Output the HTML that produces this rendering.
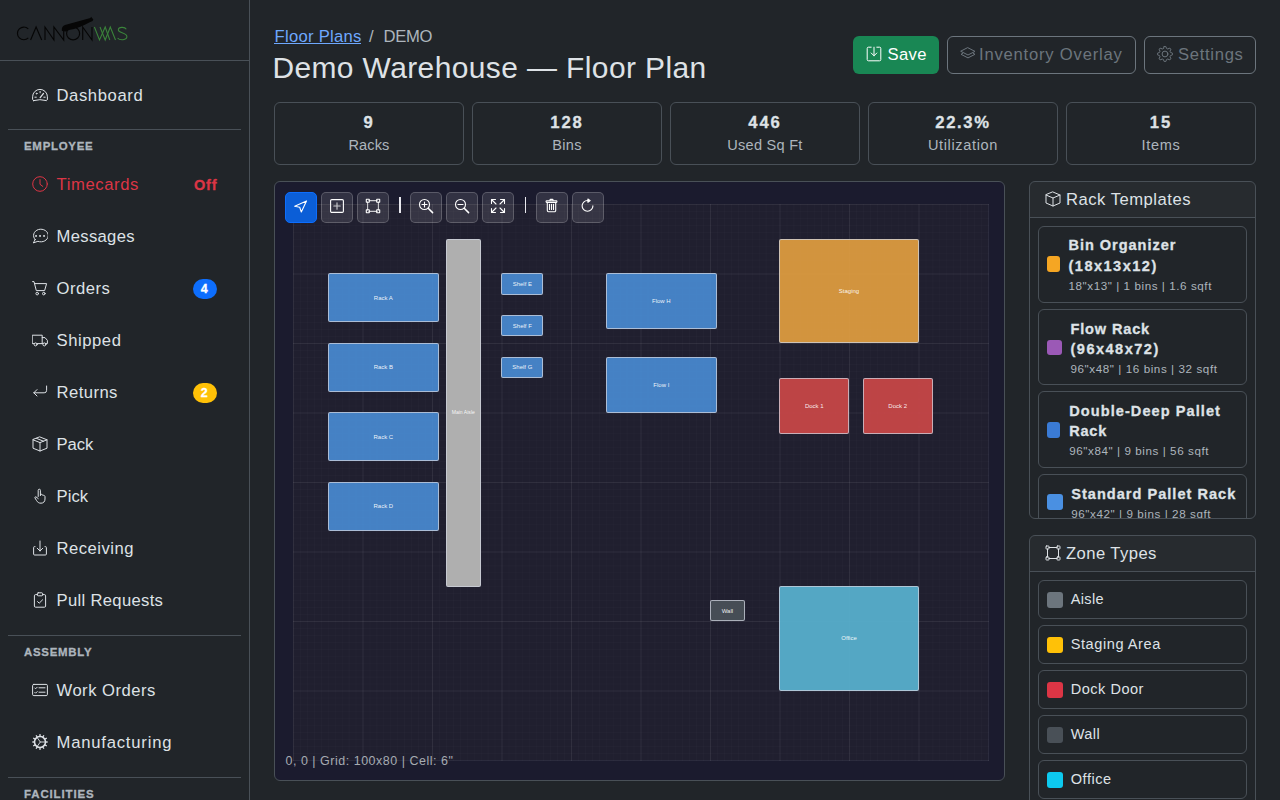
<!DOCTYPE html>
<html><head><meta charset="utf-8"><title>Floor Plan</title>
<style>
html,body{margin:0;padding:0;width:1280px;height:800px;overflow:hidden;background:#212529;font-family:"Liberation Sans",sans-serif;}
.a{position:absolute;}
.t{position:absolute;white-space:nowrap;}
svg.a{display:block;}
</style></head><body>
<div class="a" style="left:249px;top:0px;width:1px;height:800px;background:#495057"></div>
<div class="a" style="left:0px;top:60px;width:249px;height:1px;background:#495057"></div>
<div class="a" style="left:8px;top:129px;width:233px;height:1px;background:#495057"></div>
<div class="a" style="left:8px;top:635px;width:233px;height:1px;background:#495057"></div>
<div class="a" style="left:8px;top:777px;width:233px;height:1px;background:#495057"></div>
<svg class="a" style="left:0;top:0" width="140" height="60" viewBox="0 0 140 60">
<g fill="none" stroke="#060606" stroke-width="1.15">
<path d="M28.3 28.9 A6.35 6.35 0 1 0 28.3 37.9"/>
<path d="M30.6 40 L36.1 27 L41.7 40"/>
<path d="M45 40 V27 L53.9 40 V27 L63.7 40 V27"/>
<circle cx="73.1" cy="33.4" r="6.5"/>
<path d="M82.7 40 V27 L92 40 V27"/>
</g>
<g fill="none" stroke="#3b853b" stroke-width="1.05">
<path d="M94.4 27 L99.5 40 L105.2 27 L109.8 40"/>
<path d="M100 27 L105.2 40 L110.3 27 L115.5 40"/>
<path d="M126.3 29.2 C125 26.8 118.5 26.5 118.3 30 C118.2 33 126.8 32.6 126.9 36.6 C127 40.6 119.5 40.6 117.6 38"/>
</g>
<path fill="#060606" d="M61.75 30.2 C61.7 27.6 63 25.8 65 25.1 L90.4 18.1 L91.1 16.8 L93.3 19.6 L92.6 21 L89.2 22.4 Q79 28.2 69 29.9 L65.8 31.5 L62.2 31 Z"/>
</svg>
<div class="t" style="left:24.00px;top:141.12px;font-size:11.44px;line-height:11.44px;letter-spacing:0.741px;color:#adb5bd;font-weight:700;-webkit-text-stroke:0.3px #adb5bd;">EMPLOYEE</div>
<div class="t" style="left:24.00px;top:647.12px;font-size:11.44px;line-height:11.44px;letter-spacing:0.732px;color:#adb5bd;font-weight:700;-webkit-text-stroke:0.3px #adb5bd;">ASSEMBLY</div>
<div class="t" style="left:24.00px;top:789.12px;font-size:11.44px;line-height:11.44px;letter-spacing:0.891px;color:#adb5bd;font-weight:700;-webkit-text-stroke:0.3px #adb5bd;">FACILITIES</div>
<svg class="a" style="left:32px;top:87px" width="16" height="16" viewBox="0 0 16 16" fill="none" stroke="#dee2e6" stroke-width="1.0" stroke-linecap="round" stroke-linejoin="round"><path d="M1.5 13.6 C.9 13.3 .6 12.7 .6 12 V9.8 A7.4 7.4 0 0 1 15.4 9.8 V12 C15.4 12.7 15.1 13.3 14.5 13.6 Q8 11.7 1.5 13.6 Z"/><path d="M8.2 10.6 L11.5 6.4" stroke-width="1.3"/><circle cx="4.6" cy="6.6" r=".45"/><path d="M8.1 4.4 V5.8 M2.9 10.2 H4.3 M11.8 10.2 H13.2"/></svg>
<div class="t" style="left:56.50px;top:87.71px;font-size:16.64px;line-height:16.64px;letter-spacing:0.600px;color:#dee2e6;">Dashboard</div>
<svg class="a" style="left:32px;top:176px" width="16" height="16" viewBox="0 0 16 16" fill="none" stroke="#dc3545" stroke-width="1.0" stroke-linecap="round" stroke-linejoin="round"><circle cx="8" cy="8" r="7.3"/><path d="M8 3.6 V8.3 L10.8 10.4"/></svg>
<div class="t" style="left:56.50px;top:176.71px;font-size:16.64px;line-height:16.64px;letter-spacing:0.611px;color:#dc3545;">Timecards</div>
<svg class="a" style="left:32px;top:228px" width="16" height="16" viewBox="0 0 16 16" fill="none" stroke="#dee2e6" stroke-width="1.0" stroke-linecap="round" stroke-linejoin="round"><path d="M3.1 11.5 A7.4 6.3 0 1 1 5.9 13.3 L1.3 14.9 C2 13.8 2.6 12.7 3.1 11.5 Z"/><rect x="3.2" y="7.1" width="1.7" height="1.7" fill="#dee2e6" stroke="none"/><rect x="7.2" y="7.1" width="1.7" height="1.7" fill="#dee2e6" stroke="none"/><rect x="11.2" y="7.1" width="1.7" height="1.7" fill="#dee2e6" stroke="none"/></svg>
<div class="t" style="left:56.50px;top:228.71px;font-size:16.64px;line-height:16.64px;letter-spacing:0.328px;color:#dee2e6;">Messages</div>
<svg class="a" style="left:32px;top:280px" width="16" height="16" viewBox="0 0 16 16" fill="none" stroke="#dee2e6" stroke-width="1.0" stroke-linecap="round" stroke-linejoin="round"><path d="M.6 1.6 H2 L4.3 10.6 H12.6 L14.6 3.6 H2.6"/><circle cx="5.2" cy="13.6" r="1.3"/><circle cx="11.8" cy="13.6" r="1.3"/></svg>
<div class="t" style="left:56.50px;top:280.71px;font-size:16.64px;line-height:16.64px;letter-spacing:0.492px;color:#dee2e6;">Orders</div>
<svg class="a" style="left:32px;top:332px" width="16" height="16" viewBox="0 0 16 16" fill="none" stroke="#dee2e6" stroke-width="1.0" stroke-linecap="round" stroke-linejoin="round"><path d="M.6 3.2 H10.2 V11.6 H.6 Z"/><path d="M10.2 5.6 H13 L15.4 8.4 V11.6 H10.2"/><circle cx="3.6" cy="12.4" r="1.5" fill="#212529"/><circle cx="12.4" cy="12.4" r="1.5" fill="#212529"/></svg>
<div class="t" style="left:56.50px;top:332.71px;font-size:16.64px;line-height:16.64px;letter-spacing:0.569px;color:#dee2e6;">Shipped</div>
<svg class="a" style="left:32px;top:384px" width="16" height="16" viewBox="0 0 16 16" fill="none" stroke="#dee2e6" stroke-width="1.0" stroke-linecap="round" stroke-linejoin="round"><path d="M14.6 2 V6.4 A2.4 2.4 0 0 1 12.2 8.8 H1.8"/><path d="M5 5.6 L1.8 8.8 L5 12"/></svg>
<div class="t" style="left:56.50px;top:384.71px;font-size:16.64px;line-height:16.64px;letter-spacing:0.452px;color:#dee2e6;">Returns</div>
<svg class="a" style="left:32px;top:436px" width="16" height="16" viewBox="0 0 16 16" fill="none" stroke="#dee2e6" stroke-width="1.0" stroke-linecap="round" stroke-linejoin="round"><path d="M8 1 L15 3.8 V12.2 L8 15 L1 12.2 V3.8 Z"/><path d="M1 3.8 L8 6.6 L15 3.8 M8 6.6 V15"/><path d="M4.5 2.4 L11.5 5.2"/></svg>
<div class="t" style="left:56.50px;top:436.71px;font-size:16.64px;line-height:16.64px;letter-spacing:-0.049px;color:#dee2e6;">Pack</div>
<svg class="a" style="left:32px;top:488px" width="16" height="16" viewBox="0 0 16 16" fill="none" stroke="#dee2e6" stroke-width="1.0" stroke-linecap="round" stroke-linejoin="round"><path d="M6.2 8.5 V2.3 A1.1 1.1 0 0 1 8.4 2.3 V7.6 M8.4 6.4 C9.6 6 10.6 6.4 10.8 7.4 C12 7 12.9 7.6 13 8.6 V11 C13 13.5 11.5 15.2 9 15.2 C6.8 15.2 5.5 14.2 4.6 12.6 L3 10 C2.6 9.3 3.3 8.5 4 8.9 L6.2 10.6"/></svg>
<div class="t" style="left:56.50px;top:488.71px;font-size:16.64px;line-height:16.64px;letter-spacing:0.092px;color:#dee2e6;">Pick</div>
<svg class="a" style="left:32px;top:540px" width="16" height="16" viewBox="0 0 16 16" fill="none" stroke="#dee2e6" stroke-width="1.0" stroke-linecap="round" stroke-linejoin="round"><path d="M3 6.6 H2.6 A1 1 0 0 0 1.6 7.6 V14 A1 1 0 0 0 2.6 15 H13.4 A1 1 0 0 0 14.4 14 V7.6 A1 1 0 0 0 13.4 6.6 H13"/><path d="M8 1 V11 M5.2 8.2 L8 11 L10.8 8.2"/></svg>
<div class="t" style="left:56.50px;top:540.71px;font-size:16.64px;line-height:16.64px;letter-spacing:0.497px;color:#dee2e6;">Receiving</div>
<svg class="a" style="left:32px;top:592px" width="16" height="16" viewBox="0 0 16 16" fill="none" stroke="#dee2e6" stroke-width="1.0" stroke-linecap="round" stroke-linejoin="round"><path d="M5 2.6 H3.6 A1.2 1.2 0 0 0 2.4 3.8 V14 A1.2 1.2 0 0 0 3.6 15.2 H12.4 A1.2 1.2 0 0 0 13.6 14 V3.8 A1.2 1.2 0 0 0 12.4 2.6 H11"/><rect x="5.4" y=".8" width="5.2" height="3" rx=".8"/><path d="M5.6 9.6 L7.2 11.2 L10.6 7.8"/></svg>
<div class="t" style="left:56.50px;top:592.71px;font-size:16.64px;line-height:16.64px;letter-spacing:0.319px;color:#dee2e6;">Pull Requests</div>
<svg class="a" style="left:32px;top:682px" width="16" height="16" viewBox="0 0 16 16" fill="none" stroke="#dee2e6" stroke-width="1.0" stroke-linecap="round" stroke-linejoin="round"><rect x=".6" y="2.4" width="14.8" height="11.2" rx="1.2"/><path d="M7 5.8 H13 M7 10.2 H13 M2.8 6 L3.6 6.8 L5.2 5.2 M2.8 10.4 L3.6 11.2 L5.2 9.6"/></svg>
<div class="t" style="left:56.50px;top:682.71px;font-size:16.64px;line-height:16.64px;letter-spacing:0.492px;color:#dee2e6;">Work Orders</div>
<svg class="a" style="left:32px;top:734px" width="16" height="16" viewBox="0 0 16 16" fill="none" stroke="#dee2e6" stroke-width="1.0" stroke-linecap="round" stroke-linejoin="round"><path fill="#dee2e6" stroke="none" fill-rule="evenodd" d="M6.40 2.01 L7.35 1.83 L7.42 0.12 L8.58 0.12 L8.65 1.83 L9.60 2.01 L10.52 2.34 L11.44 0.89 L12.44 1.47 L11.64 2.98 L12.38 3.62 L13.02 4.36 L14.53 3.56 L15.11 4.56 L13.66 5.48 L13.99 6.40 L14.17 7.35 L15.88 7.42 L15.88 8.58 L14.17 8.65 L13.99 9.60 L13.66 10.52 L15.11 11.44 L14.53 12.44 L13.02 11.64 L12.38 12.38 L11.64 13.02 L12.44 14.53 L11.44 15.11 L10.52 13.66 L9.60 13.99 L8.65 14.17 L8.58 15.88 L7.42 15.88 L7.35 14.17 L6.40 13.99 L5.48 13.66 L4.56 15.11 L3.56 14.53 L4.36 13.02 L3.62 12.38 L2.98 11.64 L1.47 12.44 L0.89 11.44 L2.34 10.52 L2.01 9.60 L1.83 8.65 L0.12 8.58 L0.12 7.42 L1.83 7.35 L2.01 6.40 L2.34 5.48 L0.89 4.56 L1.47 3.56 L2.98 4.36 L3.62 3.62 L4.36 2.98 L3.56 1.47 L4.56 0.89 L5.48 2.34 Z M12.7 8 A4.7 4.7 0 1 0 3.3 8 A4.7 4.7 0 1 0 12.7 8 Z"/><path d="M5.4 3.9 L8.3 8 L5.4 12.1 M8.3 8 H12.6" stroke-width=".9"/></svg>
<div class="t" style="left:56.50px;top:734.71px;font-size:16.64px;line-height:16.64px;letter-spacing:0.801px;color:#dee2e6;">Manufacturing</div>
<div class="t" style="left:194.00px;top:178.47px;font-size:14.56px;line-height:14.56px;letter-spacing:0.740px;color:#dc3545;font-weight:700;-webkit-text-stroke:0.3px #dc3545;">Off</div>
<div class="a" style="left:193px;top:279px;width:24px;height:20px;background:#0d6efd;border-radius:10px"></div>
<div class="t" style="left:200.83px;top:283.04px;font-size:12.48px;line-height:12.48px;letter-spacing:1.409px;color:#fff;font-weight:700;-webkit-text-stroke:0.3px #fff;">4</div>
<div class="a" style="left:193px;top:383px;width:24px;height:20px;background:#ffc107;border-radius:10px"></div>
<div class="t" style="left:200.83px;top:386.54px;font-size:12.48px;line-height:12.48px;letter-spacing:1.409px;color:#fff;font-weight:700;-webkit-text-stroke:0.3px #fff;">2</div>
<div class="t" style="left:274.50px;top:28.71px;font-size:16.64px;line-height:16.64px;letter-spacing:0.282px;color:#6ea8fe;">Floor Plans</div>
<div class="a" style="left:274px;top:43px;width:87px;height:1px;background:#6ea8fe"></div>
<div class="t" style="left:369.00px;top:28.71px;font-size:16.64px;line-height:16.64px;letter-spacing:0.767px;color:#adb5bd;">/</div>
<div class="t" style="left:383.50px;top:28.71px;font-size:16.64px;line-height:16.64px;letter-spacing:-0.273px;color:#adb5bd;">DEMO</div>
<div class="t" style="left:272.40px;top:52.95px;font-size:29.95px;line-height:29.95px;letter-spacing:0.411px;color:#dee2e6;">Demo Warehouse — Floor Plan</div>
<div class="a" style="left:853px;top:36px;width:86px;height:38px;background:#198754;border-radius:6px"></div>
<svg class="a" style="left:866px;top:46px" width="16" height="16" viewBox="0 0 16 16" fill="none" stroke="#fff" stroke-width="1.0" stroke-linecap="round" stroke-linejoin="round"><path d="M5.2 1.2 H2.4 A1.2 1.2 0 0 0 1.2 2.4 V13.6 A1.2 1.2 0 0 0 2.4 14.8 H13.6 A1.2 1.2 0 0 0 14.8 13.6 V2.4 A1.2 1.2 0 0 0 13.6 1.2 H10.8"/><path d="M8 1.2 V9.8 M5.2 7 L8 9.8 L10.8 7"/></svg>
<div class="t" style="left:887.50px;top:46.71px;font-size:16.64px;line-height:16.64px;letter-spacing:0.336px;color:#fff;">Save</div>
<div class="a" style="left:947px;top:36px;width:189px;height:38px;border:1px solid #6c757d;border-radius:6px;box-sizing:border-box"></div>
<svg class="a" style="left:960px;top:46px" width="16" height="16" viewBox="0 0 16 16" fill="none" stroke="#6c757d" stroke-width="1.0" stroke-linecap="round" stroke-linejoin="round"><path d="M8 1.8 L15 5.4 L8 9 L1 5.4 Z"/><path d="M2.6 7.4 L1 8.3 L8 11.9 L15 8.3 L13.4 7.4"/></svg>
<div class="t" style="left:979.00px;top:46.71px;font-size:16.64px;line-height:16.64px;letter-spacing:0.783px;color:#6c757d;">Inventory Overlay</div>
<div class="a" style="left:1144px;top:36px;width:112px;height:38px;border:1px solid #6c757d;border-radius:6px;box-sizing:border-box"></div>
<svg class="a" style="left:1157px;top:46px" width="16" height="16" viewBox="0 0 16 16" fill="none" stroke="#6c757d" stroke-width="1.0" stroke-linecap="round" stroke-linejoin="round"><circle cx="8" cy="8" r="2.9"/><path d="M7.26 0.44 L8.74 0.44 L9.65 2.55 L10.69 2.97 L12.82 2.13 L13.87 3.18 L13.03 5.31 L13.45 6.35 L15.56 7.26 L15.56 8.74 L13.45 9.65 L13.03 10.69 L13.87 12.82 L12.82 13.87 L10.69 13.03 L9.65 13.45 L8.74 15.56 L7.26 15.56 L6.35 13.45 L5.31 13.03 L3.18 13.87 L2.13 12.82 L2.97 10.69 L2.55 9.65 L0.44 8.74 L0.44 7.26 L2.55 6.35 L2.97 5.31 L2.13 3.18 L3.18 2.13 L5.31 2.97 L6.35 2.55 Z"/></svg>
<div class="t" style="left:1178.00px;top:46.71px;font-size:16.64px;line-height:16.64px;letter-spacing:0.687px;color:#6c757d;">Settings</div>
<div class="a" style="left:274px;top:102px;width:190px;height:63px;border:1px solid #495057;border-radius:6px;box-sizing:border-box"></div>
<div class="t" style="left:363.43px;top:114.71px;font-size:16.64px;line-height:16.64px;letter-spacing:1.878px;color:#dee2e6;font-weight:700;-webkit-text-stroke:0.3px #dee2e6;">9</div>
<div class="t" style="left:348.45px;top:138.27px;font-size:14.56px;line-height:14.56px;letter-spacing:0.129px;color:#adb5bd;">Racks</div>
<div class="a" style="left:472px;top:102px;width:190px;height:63px;border:1px solid #495057;border-radius:6px;box-sizing:border-box"></div>
<div class="t" style="left:550.30px;top:114.71px;font-size:16.64px;line-height:16.64px;letter-spacing:1.878px;color:#dee2e6;font-weight:700;-webkit-text-stroke:0.3px #dee2e6;">128</div>
<div class="t" style="left:552.17px;top:138.27px;font-size:14.56px;line-height:14.56px;letter-spacing:0.334px;color:#adb5bd;">Bins</div>
<div class="a" style="left:670px;top:102px;width:190px;height:63px;border:1px solid #495057;border-radius:6px;box-sizing:border-box"></div>
<div class="t" style="left:748.30px;top:114.71px;font-size:16.64px;line-height:16.64px;letter-spacing:1.878px;color:#dee2e6;font-weight:700;-webkit-text-stroke:0.3px #dee2e6;">446</div>
<div class="t" style="left:727.37px;top:138.27px;font-size:14.56px;line-height:14.56px;letter-spacing:0.243px;color:#adb5bd;">Used Sq Ft</div>
<div class="a" style="left:868px;top:102px;width:190px;height:63px;border:1px solid #495057;border-radius:6px;box-sizing:border-box"></div>
<div class="t" style="left:935.25px;top:114.71px;font-size:16.64px;line-height:16.64px;letter-spacing:1.665px;color:#dee2e6;font-weight:700;-webkit-text-stroke:0.3px #dee2e6;">22.3%</div>
<div class="t" style="left:927.92px;top:138.27px;font-size:14.56px;line-height:14.56px;letter-spacing:0.639px;color:#adb5bd;">Utilization</div>
<div class="a" style="left:1066px;top:102px;width:190px;height:63px;border:1px solid #495057;border-radius:6px;box-sizing:border-box"></div>
<div class="t" style="left:1149.87px;top:114.71px;font-size:16.64px;line-height:16.64px;letter-spacing:1.878px;color:#dee2e6;font-weight:700;-webkit-text-stroke:0.3px #dee2e6;">15</div>
<div class="t" style="left:1141.42px;top:138.27px;font-size:14.56px;line-height:14.56px;letter-spacing:0.713px;color:#adb5bd;">Items</div>
<div class="a" style="left:274px;top:181px;width:731px;height:600px;background:#1b1b2e;border:1px solid #495057;border-radius:6px;box-sizing:border-box"></div>
<div class="a" style="left:293.0px;top:204.0px;width:695px;height:556px;background:#201f2f"></div>
<svg class="a" style="left:292.5px;top:203.5px;overflow:visible" width="696" height="557" viewBox="-0.5 -0.5 696 557"><rect x="-0.50" y="-0.5" width="1" height="557" fill="rgba(255,255,255,0.075)"/><rect x="6.45" y="-0.5" width="1" height="557" fill="rgba(255,255,255,0.02)"/><rect x="13.40" y="-0.5" width="1" height="557" fill="rgba(255,255,255,0.02)"/><rect x="20.35" y="-0.5" width="1" height="557" fill="rgba(255,255,255,0.02)"/><rect x="27.30" y="-0.5" width="1" height="557" fill="rgba(255,255,255,0.02)"/><rect x="34.25" y="-0.5" width="1" height="557" fill="rgba(255,255,255,0.02)"/><rect x="41.20" y="-0.5" width="1" height="557" fill="rgba(255,255,255,0.02)"/><rect x="48.15" y="-0.5" width="1" height="557" fill="rgba(255,255,255,0.02)"/><rect x="55.10" y="-0.5" width="1" height="557" fill="rgba(255,255,255,0.02)"/><rect x="62.05" y="-0.5" width="1" height="557" fill="rgba(255,255,255,0.02)"/><rect x="69.00" y="-0.5" width="1" height="557" fill="rgba(255,255,255,0.075)"/><rect x="75.95" y="-0.5" width="1" height="557" fill="rgba(255,255,255,0.02)"/><rect x="82.90" y="-0.5" width="1" height="557" fill="rgba(255,255,255,0.02)"/><rect x="89.85" y="-0.5" width="1" height="557" fill="rgba(255,255,255,0.02)"/><rect x="96.80" y="-0.5" width="1" height="557" fill="rgba(255,255,255,0.02)"/><rect x="103.75" y="-0.5" width="1" height="557" fill="rgba(255,255,255,0.02)"/><rect x="110.70" y="-0.5" width="1" height="557" fill="rgba(255,255,255,0.02)"/><rect x="117.65" y="-0.5" width="1" height="557" fill="rgba(255,255,255,0.02)"/><rect x="124.60" y="-0.5" width="1" height="557" fill="rgba(255,255,255,0.02)"/><rect x="131.55" y="-0.5" width="1" height="557" fill="rgba(255,255,255,0.02)"/><rect x="138.50" y="-0.5" width="1" height="557" fill="rgba(255,255,255,0.075)"/><rect x="145.45" y="-0.5" width="1" height="557" fill="rgba(255,255,255,0.02)"/><rect x="152.40" y="-0.5" width="1" height="557" fill="rgba(255,255,255,0.02)"/><rect x="159.35" y="-0.5" width="1" height="557" fill="rgba(255,255,255,0.02)"/><rect x="166.30" y="-0.5" width="1" height="557" fill="rgba(255,255,255,0.02)"/><rect x="173.25" y="-0.5" width="1" height="557" fill="rgba(255,255,255,0.02)"/><rect x="180.20" y="-0.5" width="1" height="557" fill="rgba(255,255,255,0.02)"/><rect x="187.15" y="-0.5" width="1" height="557" fill="rgba(255,255,255,0.02)"/><rect x="194.10" y="-0.5" width="1" height="557" fill="rgba(255,255,255,0.02)"/><rect x="201.05" y="-0.5" width="1" height="557" fill="rgba(255,255,255,0.02)"/><rect x="208.00" y="-0.5" width="1" height="557" fill="rgba(255,255,255,0.075)"/><rect x="214.95" y="-0.5" width="1" height="557" fill="rgba(255,255,255,0.02)"/><rect x="221.90" y="-0.5" width="1" height="557" fill="rgba(255,255,255,0.02)"/><rect x="228.85" y="-0.5" width="1" height="557" fill="rgba(255,255,255,0.02)"/><rect x="235.80" y="-0.5" width="1" height="557" fill="rgba(255,255,255,0.02)"/><rect x="242.75" y="-0.5" width="1" height="557" fill="rgba(255,255,255,0.02)"/><rect x="249.70" y="-0.5" width="1" height="557" fill="rgba(255,255,255,0.02)"/><rect x="256.65" y="-0.5" width="1" height="557" fill="rgba(255,255,255,0.02)"/><rect x="263.60" y="-0.5" width="1" height="557" fill="rgba(255,255,255,0.02)"/><rect x="270.55" y="-0.5" width="1" height="557" fill="rgba(255,255,255,0.02)"/><rect x="277.50" y="-0.5" width="1" height="557" fill="rgba(255,255,255,0.075)"/><rect x="284.45" y="-0.5" width="1" height="557" fill="rgba(255,255,255,0.02)"/><rect x="291.40" y="-0.5" width="1" height="557" fill="rgba(255,255,255,0.02)"/><rect x="298.35" y="-0.5" width="1" height="557" fill="rgba(255,255,255,0.02)"/><rect x="305.30" y="-0.5" width="1" height="557" fill="rgba(255,255,255,0.02)"/><rect x="312.25" y="-0.5" width="1" height="557" fill="rgba(255,255,255,0.02)"/><rect x="319.20" y="-0.5" width="1" height="557" fill="rgba(255,255,255,0.02)"/><rect x="326.15" y="-0.5" width="1" height="557" fill="rgba(255,255,255,0.02)"/><rect x="333.10" y="-0.5" width="1" height="557" fill="rgba(255,255,255,0.02)"/><rect x="340.05" y="-0.5" width="1" height="557" fill="rgba(255,255,255,0.02)"/><rect x="347.00" y="-0.5" width="1" height="557" fill="rgba(255,255,255,0.075)"/><rect x="353.95" y="-0.5" width="1" height="557" fill="rgba(255,255,255,0.02)"/><rect x="360.90" y="-0.5" width="1" height="557" fill="rgba(255,255,255,0.02)"/><rect x="367.85" y="-0.5" width="1" height="557" fill="rgba(255,255,255,0.02)"/><rect x="374.80" y="-0.5" width="1" height="557" fill="rgba(255,255,255,0.02)"/><rect x="381.75" y="-0.5" width="1" height="557" fill="rgba(255,255,255,0.02)"/><rect x="388.70" y="-0.5" width="1" height="557" fill="rgba(255,255,255,0.02)"/><rect x="395.65" y="-0.5" width="1" height="557" fill="rgba(255,255,255,0.02)"/><rect x="402.60" y="-0.5" width="1" height="557" fill="rgba(255,255,255,0.02)"/><rect x="409.55" y="-0.5" width="1" height="557" fill="rgba(255,255,255,0.02)"/><rect x="416.50" y="-0.5" width="1" height="557" fill="rgba(255,255,255,0.075)"/><rect x="423.45" y="-0.5" width="1" height="557" fill="rgba(255,255,255,0.02)"/><rect x="430.40" y="-0.5" width="1" height="557" fill="rgba(255,255,255,0.02)"/><rect x="437.35" y="-0.5" width="1" height="557" fill="rgba(255,255,255,0.02)"/><rect x="444.30" y="-0.5" width="1" height="557" fill="rgba(255,255,255,0.02)"/><rect x="451.25" y="-0.5" width="1" height="557" fill="rgba(255,255,255,0.02)"/><rect x="458.20" y="-0.5" width="1" height="557" fill="rgba(255,255,255,0.02)"/><rect x="465.15" y="-0.5" width="1" height="557" fill="rgba(255,255,255,0.02)"/><rect x="472.10" y="-0.5" width="1" height="557" fill="rgba(255,255,255,0.02)"/><rect x="479.05" y="-0.5" width="1" height="557" fill="rgba(255,255,255,0.02)"/><rect x="486.00" y="-0.5" width="1" height="557" fill="rgba(255,255,255,0.075)"/><rect x="492.95" y="-0.5" width="1" height="557" fill="rgba(255,255,255,0.02)"/><rect x="499.90" y="-0.5" width="1" height="557" fill="rgba(255,255,255,0.02)"/><rect x="506.85" y="-0.5" width="1" height="557" fill="rgba(255,255,255,0.02)"/><rect x="513.80" y="-0.5" width="1" height="557" fill="rgba(255,255,255,0.02)"/><rect x="520.75" y="-0.5" width="1" height="557" fill="rgba(255,255,255,0.02)"/><rect x="527.70" y="-0.5" width="1" height="557" fill="rgba(255,255,255,0.02)"/><rect x="534.65" y="-0.5" width="1" height="557" fill="rgba(255,255,255,0.02)"/><rect x="541.60" y="-0.5" width="1" height="557" fill="rgba(255,255,255,0.02)"/><rect x="548.55" y="-0.5" width="1" height="557" fill="rgba(255,255,255,0.02)"/><rect x="555.50" y="-0.5" width="1" height="557" fill="rgba(255,255,255,0.075)"/><rect x="562.45" y="-0.5" width="1" height="557" fill="rgba(255,255,255,0.02)"/><rect x="569.40" y="-0.5" width="1" height="557" fill="rgba(255,255,255,0.02)"/><rect x="576.35" y="-0.5" width="1" height="557" fill="rgba(255,255,255,0.02)"/><rect x="583.30" y="-0.5" width="1" height="557" fill="rgba(255,255,255,0.02)"/><rect x="590.25" y="-0.5" width="1" height="557" fill="rgba(255,255,255,0.02)"/><rect x="597.20" y="-0.5" width="1" height="557" fill="rgba(255,255,255,0.02)"/><rect x="604.15" y="-0.5" width="1" height="557" fill="rgba(255,255,255,0.02)"/><rect x="611.10" y="-0.5" width="1" height="557" fill="rgba(255,255,255,0.02)"/><rect x="618.05" y="-0.5" width="1" height="557" fill="rgba(255,255,255,0.02)"/><rect x="625.00" y="-0.5" width="1" height="557" fill="rgba(255,255,255,0.075)"/><rect x="631.95" y="-0.5" width="1" height="557" fill="rgba(255,255,255,0.02)"/><rect x="638.90" y="-0.5" width="1" height="557" fill="rgba(255,255,255,0.02)"/><rect x="645.85" y="-0.5" width="1" height="557" fill="rgba(255,255,255,0.02)"/><rect x="652.80" y="-0.5" width="1" height="557" fill="rgba(255,255,255,0.02)"/><rect x="659.75" y="-0.5" width="1" height="557" fill="rgba(255,255,255,0.02)"/><rect x="666.70" y="-0.5" width="1" height="557" fill="rgba(255,255,255,0.02)"/><rect x="673.65" y="-0.5" width="1" height="557" fill="rgba(255,255,255,0.02)"/><rect x="680.60" y="-0.5" width="1" height="557" fill="rgba(255,255,255,0.02)"/><rect x="687.55" y="-0.5" width="1" height="557" fill="rgba(255,255,255,0.02)"/><rect x="694.50" y="-0.5" width="1" height="557" fill="rgba(255,255,255,0.075)"/><rect x="-0.5" y="-0.50" width="696" height="1" fill="rgba(255,255,255,0.075)"/><rect x="-0.5" y="6.45" width="696" height="1" fill="rgba(255,255,255,0.02)"/><rect x="-0.5" y="13.40" width="696" height="1" fill="rgba(255,255,255,0.02)"/><rect x="-0.5" y="20.35" width="696" height="1" fill="rgba(255,255,255,0.02)"/><rect x="-0.5" y="27.30" width="696" height="1" fill="rgba(255,255,255,0.02)"/><rect x="-0.5" y="34.25" width="696" height="1" fill="rgba(255,255,255,0.02)"/><rect x="-0.5" y="41.20" width="696" height="1" fill="rgba(255,255,255,0.02)"/><rect x="-0.5" y="48.15" width="696" height="1" fill="rgba(255,255,255,0.02)"/><rect x="-0.5" y="55.10" width="696" height="1" fill="rgba(255,255,255,0.02)"/><rect x="-0.5" y="62.05" width="696" height="1" fill="rgba(255,255,255,0.02)"/><rect x="-0.5" y="69.00" width="696" height="1" fill="rgba(255,255,255,0.075)"/><rect x="-0.5" y="75.95" width="696" height="1" fill="rgba(255,255,255,0.02)"/><rect x="-0.5" y="82.90" width="696" height="1" fill="rgba(255,255,255,0.02)"/><rect x="-0.5" y="89.85" width="696" height="1" fill="rgba(255,255,255,0.02)"/><rect x="-0.5" y="96.80" width="696" height="1" fill="rgba(255,255,255,0.02)"/><rect x="-0.5" y="103.75" width="696" height="1" fill="rgba(255,255,255,0.02)"/><rect x="-0.5" y="110.70" width="696" height="1" fill="rgba(255,255,255,0.02)"/><rect x="-0.5" y="117.65" width="696" height="1" fill="rgba(255,255,255,0.02)"/><rect x="-0.5" y="124.60" width="696" height="1" fill="rgba(255,255,255,0.02)"/><rect x="-0.5" y="131.55" width="696" height="1" fill="rgba(255,255,255,0.02)"/><rect x="-0.5" y="138.50" width="696" height="1" fill="rgba(255,255,255,0.075)"/><rect x="-0.5" y="145.45" width="696" height="1" fill="rgba(255,255,255,0.02)"/><rect x="-0.5" y="152.40" width="696" height="1" fill="rgba(255,255,255,0.02)"/><rect x="-0.5" y="159.35" width="696" height="1" fill="rgba(255,255,255,0.02)"/><rect x="-0.5" y="166.30" width="696" height="1" fill="rgba(255,255,255,0.02)"/><rect x="-0.5" y="173.25" width="696" height="1" fill="rgba(255,255,255,0.02)"/><rect x="-0.5" y="180.20" width="696" height="1" fill="rgba(255,255,255,0.02)"/><rect x="-0.5" y="187.15" width="696" height="1" fill="rgba(255,255,255,0.02)"/><rect x="-0.5" y="194.10" width="696" height="1" fill="rgba(255,255,255,0.02)"/><rect x="-0.5" y="201.05" width="696" height="1" fill="rgba(255,255,255,0.02)"/><rect x="-0.5" y="208.00" width="696" height="1" fill="rgba(255,255,255,0.075)"/><rect x="-0.5" y="214.95" width="696" height="1" fill="rgba(255,255,255,0.02)"/><rect x="-0.5" y="221.90" width="696" height="1" fill="rgba(255,255,255,0.02)"/><rect x="-0.5" y="228.85" width="696" height="1" fill="rgba(255,255,255,0.02)"/><rect x="-0.5" y="235.80" width="696" height="1" fill="rgba(255,255,255,0.02)"/><rect x="-0.5" y="242.75" width="696" height="1" fill="rgba(255,255,255,0.02)"/><rect x="-0.5" y="249.70" width="696" height="1" fill="rgba(255,255,255,0.02)"/><rect x="-0.5" y="256.65" width="696" height="1" fill="rgba(255,255,255,0.02)"/><rect x="-0.5" y="263.60" width="696" height="1" fill="rgba(255,255,255,0.02)"/><rect x="-0.5" y="270.55" width="696" height="1" fill="rgba(255,255,255,0.02)"/><rect x="-0.5" y="277.50" width="696" height="1" fill="rgba(255,255,255,0.075)"/><rect x="-0.5" y="284.45" width="696" height="1" fill="rgba(255,255,255,0.02)"/><rect x="-0.5" y="291.40" width="696" height="1" fill="rgba(255,255,255,0.02)"/><rect x="-0.5" y="298.35" width="696" height="1" fill="rgba(255,255,255,0.02)"/><rect x="-0.5" y="305.30" width="696" height="1" fill="rgba(255,255,255,0.02)"/><rect x="-0.5" y="312.25" width="696" height="1" fill="rgba(255,255,255,0.02)"/><rect x="-0.5" y="319.20" width="696" height="1" fill="rgba(255,255,255,0.02)"/><rect x="-0.5" y="326.15" width="696" height="1" fill="rgba(255,255,255,0.02)"/><rect x="-0.5" y="333.10" width="696" height="1" fill="rgba(255,255,255,0.02)"/><rect x="-0.5" y="340.05" width="696" height="1" fill="rgba(255,255,255,0.02)"/><rect x="-0.5" y="347.00" width="696" height="1" fill="rgba(255,255,255,0.075)"/><rect x="-0.5" y="353.95" width="696" height="1" fill="rgba(255,255,255,0.02)"/><rect x="-0.5" y="360.90" width="696" height="1" fill="rgba(255,255,255,0.02)"/><rect x="-0.5" y="367.85" width="696" height="1" fill="rgba(255,255,255,0.02)"/><rect x="-0.5" y="374.80" width="696" height="1" fill="rgba(255,255,255,0.02)"/><rect x="-0.5" y="381.75" width="696" height="1" fill="rgba(255,255,255,0.02)"/><rect x="-0.5" y="388.70" width="696" height="1" fill="rgba(255,255,255,0.02)"/><rect x="-0.5" y="395.65" width="696" height="1" fill="rgba(255,255,255,0.02)"/><rect x="-0.5" y="402.60" width="696" height="1" fill="rgba(255,255,255,0.02)"/><rect x="-0.5" y="409.55" width="696" height="1" fill="rgba(255,255,255,0.02)"/><rect x="-0.5" y="416.50" width="696" height="1" fill="rgba(255,255,255,0.075)"/><rect x="-0.5" y="423.45" width="696" height="1" fill="rgba(255,255,255,0.02)"/><rect x="-0.5" y="430.40" width="696" height="1" fill="rgba(255,255,255,0.02)"/><rect x="-0.5" y="437.35" width="696" height="1" fill="rgba(255,255,255,0.02)"/><rect x="-0.5" y="444.30" width="696" height="1" fill="rgba(255,255,255,0.02)"/><rect x="-0.5" y="451.25" width="696" height="1" fill="rgba(255,255,255,0.02)"/><rect x="-0.5" y="458.20" width="696" height="1" fill="rgba(255,255,255,0.02)"/><rect x="-0.5" y="465.15" width="696" height="1" fill="rgba(255,255,255,0.02)"/><rect x="-0.5" y="472.10" width="696" height="1" fill="rgba(255,255,255,0.02)"/><rect x="-0.5" y="479.05" width="696" height="1" fill="rgba(255,255,255,0.02)"/><rect x="-0.5" y="486.00" width="696" height="1" fill="rgba(255,255,255,0.075)"/><rect x="-0.5" y="492.95" width="696" height="1" fill="rgba(255,255,255,0.02)"/><rect x="-0.5" y="499.90" width="696" height="1" fill="rgba(255,255,255,0.02)"/><rect x="-0.5" y="506.85" width="696" height="1" fill="rgba(255,255,255,0.02)"/><rect x="-0.5" y="513.80" width="696" height="1" fill="rgba(255,255,255,0.02)"/><rect x="-0.5" y="520.75" width="696" height="1" fill="rgba(255,255,255,0.02)"/><rect x="-0.5" y="527.70" width="696" height="1" fill="rgba(255,255,255,0.02)"/><rect x="-0.5" y="534.65" width="696" height="1" fill="rgba(255,255,255,0.02)"/><rect x="-0.5" y="541.60" width="696" height="1" fill="rgba(255,255,255,0.02)"/><rect x="-0.5" y="548.55" width="696" height="1" fill="rgba(255,255,255,0.02)"/><rect x="-0.5" y="555.50" width="696" height="1" fill="rgba(255,255,255,0.075)"/></svg>
<div class="a" style="left:327.50px;top:273.25px;width:111.70px;height:49.15px;background:rgba(74,144,217,0.88);border:1px solid rgba(205,210,220,0.75);border-radius:2px;box-sizing:border-box"></div>
<div class="t" style="left:373.85px;top:294.85px;font-size:6.0px;line-height:6.0px;color:rgba(255,255,255,0.92)">Rack A</div>
<div class="a" style="left:327.50px;top:342.75px;width:111.70px;height:49.15px;background:rgba(74,144,217,0.88);border:1px solid rgba(205,210,220,0.75);border-radius:2px;box-sizing:border-box"></div>
<div class="t" style="left:373.68px;top:364.35px;font-size:6.0px;line-height:6.0px;color:rgba(255,255,255,0.92)">Rack B</div>
<div class="a" style="left:327.50px;top:412.25px;width:111.70px;height:49.15px;background:rgba(74,144,217,0.88);border:1px solid rgba(205,210,220,0.75);border-radius:2px;box-sizing:border-box"></div>
<div class="t" style="left:373.51px;top:433.85px;font-size:6.0px;line-height:6.0px;color:rgba(255,255,255,0.92)">Rack C</div>
<div class="a" style="left:327.50px;top:481.75px;width:111.70px;height:49.15px;background:rgba(74,144,217,0.88);border:1px solid rgba(205,210,220,0.75);border-radius:2px;box-sizing:border-box"></div>
<div class="t" style="left:373.51px;top:503.35px;font-size:6.0px;line-height:6.0px;color:rgba(255,255,255,0.92)">Rack D</div>
<div class="a" style="left:445.65px;top:238.50px;width:35.25px;height:348.00px;background:rgba(180,180,180,0.97);border:1px solid rgba(205,210,220,0.75);border-radius:2px;box-sizing:border-box"></div>
<div class="t" style="left:451.65px;top:410.28px;font-size:5.1px;line-height:5.1px;color:rgba(255,255,255,0.92)">Main Aisle</div>
<div class="a" style="left:501.25px;top:273.25px;width:42.20px;height:21.35px;background:rgba(74,144,217,0.88);border:1px solid rgba(205,210,220,0.75);border-radius:2px;box-sizing:border-box"></div>
<div class="t" style="left:512.68px;top:280.95px;font-size:6.0px;line-height:6.0px;color:rgba(255,255,255,0.92)">Shelf E</div>
<div class="a" style="left:501.25px;top:314.95px;width:42.20px;height:21.35px;background:rgba(74,144,217,0.88);border:1px solid rgba(205,210,220,0.75);border-radius:2px;box-sizing:border-box"></div>
<div class="t" style="left:512.85px;top:322.65px;font-size:6.0px;line-height:6.0px;color:rgba(255,255,255,0.92)">Shelf F</div>
<div class="a" style="left:501.25px;top:356.65px;width:42.20px;height:21.35px;background:rgba(74,144,217,0.88);border:1px solid rgba(205,210,220,0.75);border-radius:2px;box-sizing:border-box"></div>
<div class="t" style="left:512.34px;top:364.35px;font-size:6.0px;line-height:6.0px;color:rgba(255,255,255,0.92)">Shelf G</div>
<div class="a" style="left:605.50px;top:273.25px;width:111.70px;height:56.10px;background:rgba(74,144,217,0.88);border:1px solid rgba(205,210,220,0.75);border-radius:2px;box-sizing:border-box"></div>
<div class="t" style="left:652.02px;top:298.32px;font-size:6.0px;line-height:6.0px;color:rgba(255,255,255,0.92)">Flow H</div>
<div class="a" style="left:605.50px;top:356.65px;width:111.70px;height:56.10px;background:rgba(74,144,217,0.88);border:1px solid rgba(205,210,220,0.75);border-radius:2px;box-sizing:border-box"></div>
<div class="t" style="left:653.35px;top:381.72px;font-size:6.0px;line-height:6.0px;color:rgba(255,255,255,0.92)">Flow I</div>
<div class="a" style="left:779.25px;top:238.50px;width:139.50px;height:104.75px;background:rgba(226,158,64,0.92);border:1px solid rgba(205,210,220,0.75);border-radius:2px;box-sizing:border-box"></div>
<div class="t" style="left:838.82px;top:287.90px;font-size:6.0px;line-height:6.0px;color:rgba(255,255,255,0.92)">Staging</div>
<div class="a" style="left:779.25px;top:377.50px;width:70.00px;height:56.10px;background:rgba(206,72,72,0.9);border:1px solid rgba(205,210,220,0.75);border-radius:2px;box-sizing:border-box"></div>
<div class="t" style="left:804.91px;top:402.57px;font-size:6.0px;line-height:6.0px;color:rgba(255,255,255,0.92)">Dock 1</div>
<div class="a" style="left:862.65px;top:377.50px;width:70.00px;height:56.10px;background:rgba(206,72,72,0.9);border:1px solid rgba(205,210,220,0.75);border-radius:2px;box-sizing:border-box"></div>
<div class="t" style="left:888.31px;top:402.57px;font-size:6.0px;line-height:6.0px;color:rgba(255,255,255,0.92)">Dock 2</div>
<div class="a" style="left:709.75px;top:599.90px;width:35.25px;height:21.35px;background:rgba(73,80,87,0.95);border:1px solid rgba(205,210,220,0.75);border-radius:2px;box-sizing:border-box"></div>
<div class="t" style="left:721.65px;top:607.60px;font-size:6.0px;line-height:6.0px;color:rgba(255,255,255,0.92)">Wall</div>
<div class="a" style="left:779.25px;top:586.00px;width:139.50px;height:104.75px;background:rgba(88,178,208,0.93);border:1px solid rgba(205,210,220,0.75);border-radius:2px;box-sizing:border-box"></div>
<div class="t" style="left:841.22px;top:635.40px;font-size:6.0px;line-height:6.0px;color:rgba(255,255,255,0.92)">Office</div>
<div class="a" style="left:285px;top:192px;width:32px;height:31px;background:#0b5ed7;border:1px solid #0d6efd;border-radius:5px;box-sizing:border-box"></div>
<div class="a" style="left:321px;top:192px;width:32px;height:31px;background:rgba(255,255,255,0.1);border:1px solid rgba(255,255,255,0.2);border-radius:5px;box-sizing:border-box"></div>
<div class="a" style="left:357px;top:192px;width:32px;height:31px;background:rgba(255,255,255,0.1);border:1px solid rgba(255,255,255,0.2);border-radius:5px;box-sizing:border-box"></div>
<div class="a" style="left:410px;top:192px;width:32px;height:31px;background:rgba(255,255,255,0.1);border:1px solid rgba(255,255,255,0.2);border-radius:5px;box-sizing:border-box"></div>
<div class="a" style="left:446px;top:192px;width:32px;height:31px;background:rgba(255,255,255,0.1);border:1px solid rgba(255,255,255,0.2);border-radius:5px;box-sizing:border-box"></div>
<div class="a" style="left:482px;top:192px;width:32px;height:31px;background:rgba(255,255,255,0.1);border:1px solid rgba(255,255,255,0.2);border-radius:5px;box-sizing:border-box"></div>
<div class="a" style="left:536px;top:192px;width:32px;height:31px;background:rgba(255,255,255,0.1);border:1px solid rgba(255,255,255,0.2);border-radius:5px;box-sizing:border-box"></div>
<div class="a" style="left:572px;top:192px;width:32px;height:31px;background:rgba(255,255,255,0.1);border:1px solid rgba(255,255,255,0.2);border-radius:5px;box-sizing:border-box"></div>
<svg class="a" style="left:293px;top:198px" width="16" height="16" viewBox="0 0 16 16" fill="none" stroke="#ffffff" stroke-width="1.1" stroke-linecap="round" stroke-linejoin="round"><path d="M13.5 2.9 L1.7 8.2 L6.7 9.3 L8.3 14 Z"/></svg>
<svg class="a" style="left:329px;top:198px" width="16" height="16" viewBox="0 0 16 16" fill="none" stroke="#ffffff" stroke-width="1.1" stroke-linecap="round" stroke-linejoin="round"><rect x="1.6" y="1.6" width="12.8" height="12.8" rx="1.2"/><path d="M8 4.8 V11.2 M4.8 8 H11.2" stroke-opacity=".75"/></svg>
<svg class="a" style="left:365px;top:198px" width="16" height="16" viewBox="0 0 16 16" fill="none" stroke="#ffffff" stroke-width="1.1" stroke-linecap="round" stroke-linejoin="round"><rect x="1.3" y="1.3" width="3" height="3" rx=".2" stroke-linejoin="miter"/><rect x="11.7" y="1.3" width="3" height="3" rx=".2" stroke-linejoin="miter"/><rect x="1.3" y="11.7" width="3" height="3" rx=".2" stroke-linejoin="miter"/><rect x="11.7" y="11.7" width="3" height="3" rx=".2" stroke-linejoin="miter"/><path d="M4 2.6 H12 M4 13.4 H12 M2.6 4 V12 M13.4 4 V12" stroke-opacity=".75"/></svg>
<svg class="a" style="left:418px;top:198px" width="16" height="16" viewBox="0 0 16 16" fill="none" stroke="#ffffff" stroke-width="1.1" stroke-linecap="round" stroke-linejoin="round"><circle cx="6.5" cy="6.5" r="5"/><path d="M10.2 10.2 L14.6 14.6" stroke-width="1.5"/><path d="M6.5 4 V9 M4 6.5 H9"/></svg>
<svg class="a" style="left:454px;top:198px" width="16" height="16" viewBox="0 0 16 16" fill="none" stroke="#ffffff" stroke-width="1.1" stroke-linecap="round" stroke-linejoin="round"><circle cx="6.5" cy="6.5" r="5"/><path d="M10.2 10.2 L14.6 14.6" stroke-width="1.5"/><path d="M4 6.5 H9"/></svg>
<svg class="a" style="left:490px;top:198px" width="16" height="16" viewBox="0 0 16 16" fill="none" stroke="#ffffff" stroke-width="1.1" stroke-linecap="round" stroke-linejoin="round"><path d="M1.5 5.5 V1.5 H5.5 M1.5 1.5 L6 6 M10.5 1.5 H14.5 V5.5 M14.5 1.5 L10 6 M1.5 10.5 V14.5 H5.5 M1.5 14.5 L6 10 M14.5 10.5 V14.5 H10.5 M14.5 14.5 L10 10"/></svg>
<svg class="a" style="left:544px;top:198px" width="16" height="16" viewBox="0 0 16 16" fill="none" stroke="#ffffff" stroke-width="1.1" stroke-linecap="round" stroke-linejoin="round"><rect x="2.1" y="2.7" width="10.8" height="1.7" rx=".6"/><path d="M6 2.6 V1.9 A.5 .5 0 0 1 6.5 1.4 H8.5 A.5 .5 0 0 1 9 1.9 V2.6"/><path d="M3.3 4.4 V12.6 A1.2 1.2 0 0 0 4.5 13.8 H10.5 A1.2 1.2 0 0 0 11.7 12.6 V4.4"/><path d="M5.5 6.2 V11.4 M7.5 6.2 V11.4 M9.5 6.2 V11.4"/></svg>
<svg class="a" style="left:580px;top:198px" width="16" height="16" viewBox="0 0 16 16" fill="none" stroke="#ffffff" stroke-width="1.1" stroke-linecap="round" stroke-linejoin="round"><path d="M12.9 7.9 A5.4 5.4 0 1 1 7.6 2.5"/><path d="M7.9 1 L10.2 2.6 L7.9 4.2 Z" fill="#fff"/></svg>
<div class="a" style="left:399px;top:197px;width:1.5px;height:16px;background:#e8e8ee"></div>
<div class="a" style="left:524.5px;top:197px;width:1.5px;height:16px;background:#e8e8ee"></div>
<div class="t" style="left:285.50px;top:755.24px;font-size:12.48px;line-height:12.48px;letter-spacing:0.519px;color:#a6abb2;">0, 0 | Grid: 100x80 | Cell: 6&quot;</div>
<div class="a" style="left:1029px;top:181px;width:227px;height:338px;border:1px solid #495057;border-radius:6px;box-sizing:border-box;overflow:hidden"></div>
<div class="a" style="left:1030px;top:182px;width:225px;height:35px;background:rgba(255,255,255,0.03);border-radius:5px 5px 0 0"></div>
<div class="a" style="left:1030px;top:217px;width:225px;height:1px;background:#495057"></div>
<svg class="a" style="left:1045px;top:191px" width="16" height="16" viewBox="0 0 16 16" fill="none" stroke="#dee2e6" stroke-width="1.0" stroke-linecap="round" stroke-linejoin="round"><path d="M8 1 L15 4 V12 L8 15 L1 12 V4 Z"/><path d="M1 4 L8 7 L15 4 M8 7 V15"/></svg>
<div class="t" style="left:1066.00px;top:191.71px;font-size:16.64px;line-height:16.64px;letter-spacing:0.499px;color:#dee2e6;">Rack Templates</div>
<div class="a" style="left:1029px;top:535px;width:227px;height:300px;border:1px solid #495057;border-radius:6px;box-sizing:border-box;overflow:hidden"></div>
<div class="a" style="left:1030px;top:536px;width:225px;height:35px;background:rgba(255,255,255,0.03);border-radius:5px 5px 0 0"></div>
<div class="a" style="left:1030px;top:571px;width:225px;height:1px;background:#495057"></div>
<svg class="a" style="left:1045px;top:545px" width="16" height="16" viewBox="0 0 16 16" fill="none" stroke="#dee2e6" stroke-width="1.0" stroke-linecap="round" stroke-linejoin="round"><rect x="1" y="1" width="3" height="3" rx=".5"/><rect x="12" y="1" width="3" height="3" rx=".5"/><rect x="1" y="12" width="3" height="3" rx=".5"/><rect x="12" y="12" width="3" height="3" rx=".5"/><path d="M4 2.5 H12 M4 13.5 H12 M2.5 4 V12 M13.5 4 V12"/></svg>
<div class="t" style="left:1066.00px;top:545.71px;font-size:16.64px;line-height:16.64px;letter-spacing:0.426px;color:#dee2e6;">Zone Types</div>
<div class="a" style="left:1030px;top:218px;width:225px;height:300px;overflow:hidden">
<div class="a" style="left:8px;top:8px;width:209px;height:77px;border:1px solid #495057;border-radius:6px;box-sizing:border-box"></div>
<div class="a" style="left:17px;top:38px;width:13px;height:16px;background:#f5a623;border-radius:3px"></div>
<div class="t" style="left:38.50px;top:20.47px;font-size:14.56px;line-height:14.56px;letter-spacing:0.956px;color:#dee2e6;font-weight:700;-webkit-text-stroke:0.3px #dee2e6;">Bin Organizer</div>
<div class="t" style="left:38.50px;top:40.97px;font-size:14.56px;line-height:14.56px;letter-spacing:1.483px;color:#dee2e6;font-weight:700;-webkit-text-stroke:0.3px #dee2e6;">(18x13x12)</div>
<div class="t" style="left:38.50px;top:61.94px;font-size:11.65px;line-height:11.65px;letter-spacing:0.564px;color:#adb5bd;">18&quot;x13&quot; | 1 bins | 1.6 sqft</div>
<div class="a" style="left:8px;top:91px;width:209px;height:76px;border:1px solid #495057;border-radius:6px;box-sizing:border-box"></div>
<div class="a" style="left:17px;top:121.5px;width:15px;height:15.5px;background:#9b59b6;border-radius:3px"></div>
<div class="t" style="left:40.50px;top:103.67px;font-size:14.56px;line-height:14.56px;letter-spacing:0.846px;color:#dee2e6;font-weight:700;-webkit-text-stroke:0.3px #dee2e6;">Flow Rack</div>
<div class="t" style="left:40.50px;top:124.17px;font-size:14.56px;line-height:14.56px;letter-spacing:1.483px;color:#dee2e6;font-weight:700;-webkit-text-stroke:0.3px #dee2e6;">(96x48x72)</div>
<div class="t" style="left:40.50px;top:145.14px;font-size:11.65px;line-height:11.65px;letter-spacing:0.576px;color:#adb5bd;">96&quot;x48&quot; | 16 bins | 32 sqft</div>
<div class="a" style="left:8px;top:173px;width:209px;height:77px;border:1px solid #495057;border-radius:6px;box-sizing:border-box"></div>
<div class="a" style="left:17px;top:204px;width:13px;height:16px;background:#3a7bd5;border-radius:3px"></div>
<div class="t" style="left:39.20px;top:185.77px;font-size:14.56px;line-height:14.56px;letter-spacing:1.071px;color:#dee2e6;font-weight:700;-webkit-text-stroke:0.3px #dee2e6;">Double-Deep Pallet</div>
<div class="t" style="left:39.20px;top:206.27px;font-size:14.56px;line-height:14.56px;letter-spacing:0.757px;color:#dee2e6;font-weight:700;-webkit-text-stroke:0.3px #dee2e6;">Rack</div>
<div class="t" style="left:39.20px;top:227.24px;font-size:11.65px;line-height:11.65px;letter-spacing:0.573px;color:#adb5bd;">96&quot;x84&quot; | 9 bins | 56 sqft</div>
<div class="a" style="left:8px;top:256px;width:209px;height:76px;border:1px solid #495057;border-radius:6px;box-sizing:border-box"></div>
<div class="a" style="left:17px;top:276px;width:15.5px;height:15.5px;background:#4a90e2;border-radius:3px"></div>
<div class="t" style="left:41.20px;top:268.77px;font-size:14.56px;line-height:14.56px;letter-spacing:1.022px;color:#dee2e6;font-weight:700;-webkit-text-stroke:0.3px #dee2e6;">Standard Pallet Rack</div>
<div class="t" style="left:41.20px;top:289.74px;font-size:11.65px;line-height:11.65px;letter-spacing:0.573px;color:#adb5bd;">96&quot;x42&quot; | 9 bins | 28 sqft</div>
</div>
<div class="a" style="left:1038px;top:580px;width:209px;height:39px;border:1px solid #495057;border-radius:6px;box-sizing:border-box"></div>
<div class="a" style="left:1047px;top:591.5px;width:16px;height:16px;background:#6c757d;border-radius:3px"></div>
<div class="t" style="left:1070.75px;top:592.47px;font-size:14.56px;line-height:14.56px;letter-spacing:0.341px;color:#dee2e6;">Aisle</div>
<div class="a" style="left:1038px;top:625px;width:209px;height:39px;border:1px solid #495057;border-radius:6px;box-sizing:border-box"></div>
<div class="a" style="left:1047px;top:636.5px;width:16px;height:16px;background:#ffc107;border-radius:3px"></div>
<div class="t" style="left:1070.75px;top:637.47px;font-size:14.56px;line-height:14.56px;letter-spacing:0.565px;color:#dee2e6;">Staging Area</div>
<div class="a" style="left:1038px;top:670px;width:209px;height:39px;border:1px solid #495057;border-radius:6px;box-sizing:border-box"></div>
<div class="a" style="left:1047px;top:681.5px;width:16px;height:16px;background:#dc3545;border-radius:3px"></div>
<div class="t" style="left:1070.75px;top:682.47px;font-size:14.56px;line-height:14.56px;letter-spacing:0.499px;color:#dee2e6;">Dock Door</div>
<div class="a" style="left:1038px;top:715px;width:209px;height:39px;border:1px solid #495057;border-radius:6px;box-sizing:border-box"></div>
<div class="a" style="left:1047px;top:726.5px;width:16px;height:16px;background:#495057;border-radius:3px"></div>
<div class="t" style="left:1070.75px;top:727.47px;font-size:14.56px;line-height:14.56px;letter-spacing:0.384px;color:#dee2e6;">Wall</div>
<div class="a" style="left:1038px;top:760px;width:209px;height:39px;border:1px solid #495057;border-radius:6px;box-sizing:border-box"></div>
<div class="a" style="left:1047px;top:771.5px;width:16px;height:16px;background:#0dcaf0;border-radius:3px"></div>
<div class="t" style="left:1070.75px;top:772.47px;font-size:14.56px;line-height:14.56px;letter-spacing:0.516px;color:#dee2e6;">Office</div>
</body></html>
